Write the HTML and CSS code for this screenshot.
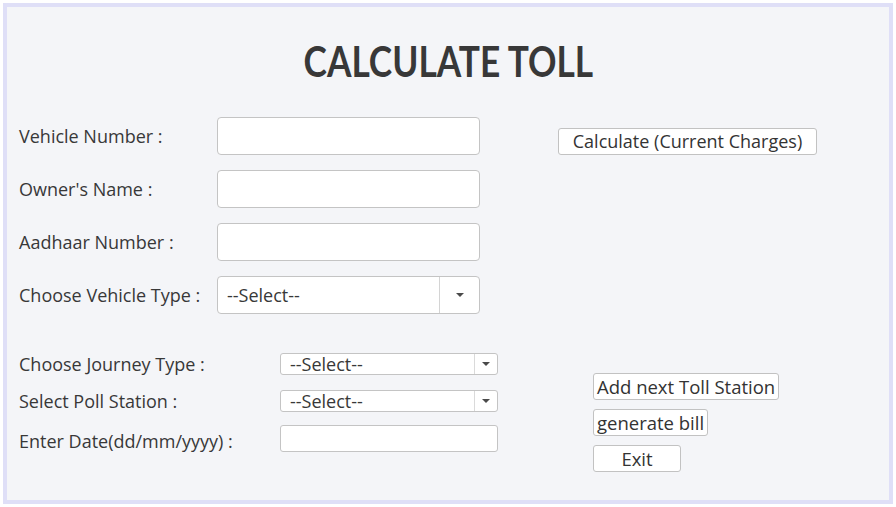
FILE: index.html
```html
<!DOCTYPE html>
<html>
<head>
<meta charset="utf-8">
<link rel="stylesheet" href="styles.css">
</head>
<body>
<div class="frame">
  <div class="title-wrap"><h1 class="title">CALCULATE TOLL</h1></div>
  <div class="top">
    <div class="grid-top">
      <label class="lbl">Vehicle Number :</label>
      <div class="field"></div>
      <label class="lbl">Owner's Name :</label>
      <div class="field"></div>
      <label class="lbl">Aadhaar Number :</label>
      <div class="field"></div>
      <label class="lbl">Choose Vehicle Type :</label>
      <div class="field combo">
        <span class="combo-text">--Select--</span>
        <span class="combo-btn"><span class="tri"></span></span>
      </div>
    </div>
    <div class="top-side">
      <button class="btn btn-calc">Calculate (Current Charges)</button>
    </div>
  </div>
  <div class="bottom">
    <div class="grid-bottom">
      <label class="lbl">Choose Journey Type :</label>
      <div class="small-combo">
        <span class="combo-text">--Select--</span>
        <span class="small-btn"><span class="tri"></span></span>
      </div>
      <label class="lbl">Select Poll Station :</label>
      <div class="small-combo">
        <span class="combo-text">--Select--</span>
        <span class="small-btn"><span class="tri"></span></span>
      </div>
      <label class="lbl">Enter Date(dd/mm/yyyy) :</label>
      <div class="date-field"></div>
    </div>
    <div class="actions">
      <button class="btn btn-big">Add next Toll Station</button>
      <button class="btn btn-big">generate bill</button>
      <button class="btn btn-big btn-exit">Exit</button>
    </div>
  </div>
</div>
</body>
</html>
```

FILE: styles.css
```css
* { box-sizing: border-box; }
html, body { margin: 0; padding: 0; background: #ffffff; }
body {
  width: 896px;
  height: 507px;
  overflow: hidden;
  font-family: "Open Sans", "Noto Sans", sans-serif;
  color: #3a3a3a;
}
.frame {
  margin: 3px 3px 0 3px;
  height: 501px;
  border: 4px solid #dfdff7;
  background: #f4f5f8;
  padding: 0 0 0 12px;
}
.title-wrap {
  height: 110px;
  padding-top: 26px;
  padding-right: 12px;
  text-align: center;
}
.title {
  display: inline-block;
  margin: 0;
  font-family: "Lato", sans-serif;
  font-weight: 700;
  font-size: 42px;
  line-height: 56px;
  color: #383838;
  letter-spacing: 0;
  transform: scaleX(0.84);
}
.top {
  display: flex;
  align-items: flex-start;
}
.grid-top {
  display: grid;
  grid-template-columns: 198px 263px;
  grid-auto-rows: 38px;
  row-gap: 15px;
  align-items: center;
}
.lbl {
  font-size: 18px;
  color: #383838;
  white-space: nowrap;
}
.field {
  height: 38px;
  background: #ffffff;
  border: 1px solid #c4c4c4;
  border-radius: 4px;
}
.combo {
  display: flex;
  align-items: center;
}
.combo-text {
  flex: 1;
  padding-left: 9px;
  font-size: 18px;
  color: #383838;
}
.combo-btn {
  width: 40px;
  height: 100%;
  border-left: 1px solid #d4d4d4;
  display: flex;
  align-items: center;
  justify-content: center;
}
.tri {
  width: 0;
  height: 0;
  border-left: 4px solid transparent;
  border-right: 4px solid transparent;
  border-top: 4px solid #4a4a4a;
}
.top-side {
  padding-left: 78px;
  padding-top: 11px;
}
.btn {
  font-family: "Open Sans", "Noto Sans", sans-serif;
  background: #ffffff;
  border: 1px solid #c2c2c2;
  border-radius: 3px;
  color: #333333;
  padding: 0 9px;
  height: 27px;
  line-height: 25px;
  cursor: pointer;
}
.btn-calc {
  font-size: 18px;
  width: 259px;
  padding: 0;
}
.bottom {
  display: flex;
  align-items: flex-start;
  margin-top: 39px;
}
.grid-bottom {
  display: grid;
  grid-template-columns: 261px 218px;
  grid-template-rows: 22px 22px 27px;
  row-gap: 15px;
  align-items: center;
}
.small-combo {
  height: 22px;
  background: #ffffff;
  border: 1px solid #c4c4c4;
  border-radius: 3px;
  display: flex;
  align-items: center;
}
.small-combo .combo-text { padding-left: 9px; line-height: 20px; }
.small-btn {
  width: 23px;
  height: 100%;
  border-left: 1px solid #dadada;
  display: flex;
  align-items: center;
  justify-content: center;
}
.date-field {
  height: 27px;
  background: #ffffff;
  border: 1px solid #c4c4c4;
  border-radius: 3px;
  margin-top: -4px;
}
.actions {
  display: flex;
  flex-direction: column;
  align-items: flex-start;
  gap: 9px;
  margin-left: 95px;
  margin-top: 20px;
}
.btn-big {
  font-size: 18.5px;
  padding: 0 3px;
}
.btn-exit {
  width: 88px;
}
```
